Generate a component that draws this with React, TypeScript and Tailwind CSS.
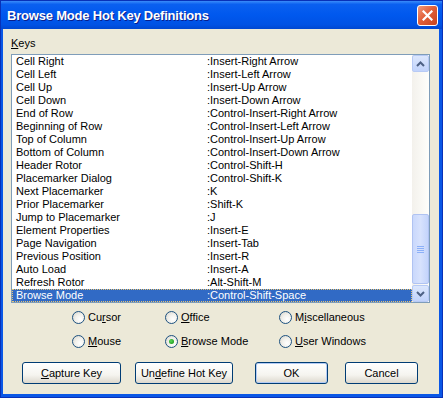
const rows: [string, string][] = [
  ["Cell Right", ":Insert-Right Arrow"],
  ["Cell Left", ":Insert-Left Arrow"],
  ["Cell Up", ":Insert-Up Arrow"],
  ["Cell Down", ":Insert-Down Arrow"],
  ["End of Row", ":Control-Insert-Right Arrow"],
  ["Beginning of Row", ":Control-Insert-Left Arrow"],
  ["Top of Column", ":Control-Insert-Up Arrow"],
  ["Bottom of Column", ":Control-Insert-Down Arrow"],
  ["Header Rotor", ":Control-Shift-H"],
  ["Placemarker Dialog", ":Control-Shift-K"],
  ["Next Placemarker", ":K"],
  ["Prior Placemarker", ":Shift-K"],
  ["Jump to Placemarker", ":J"],
  ["Element Properties", ":Insert-E"],
  ["Page Navigation", ":Insert-Tab"],
  ["Previous Position", ":Insert-R"],
  ["Auto Load", ":Insert-A"],
  ["Refresh Rotor", ":Alt-Shift-M"],
  ["Browse Mode", ":Control-Shift-Space"],
];

const Radio = ({ checked, children }: { checked?: boolean; children: React.ReactNode }) => (
  <div className="flex items-center">
    <span className="w-[13px] h-[13px] rounded-full border border-[#1C5180] bg-[radial-gradient(circle_at_65%_65%,#FFFFFF_0%,#F2F1EC_45%,#D4D2C8_100%)] flex items-center justify-center">
      {checked && <span className="w-[5px] h-[5px] rounded-full bg-[radial-gradient(circle_at_40%_40%,#5CD65C_0%,#21A121_70%)]" />}
    </span>
    <span className="ml-[3px]">{children}</span>
  </div>
);

const Button = ({ w, def, children }: { w: string; def?: boolean; children: React.ReactNode }) => (
  <button
    className={`${w} h-[22px] rounded-[3px] border border-[#003C74] bg-[linear-gradient(180deg,#FFFFFF_0%,#F5F4EF_60%,#DCD8CD_100%)] text-black text-[11px] leading-none ${
      def ? "shadow-[inset_0_0_0_1px_#B3CBF5]" : ""
    }`}
  >
    {children}
  </button>
);

const Chevron = ({ up }: { up?: boolean }) => (
  <svg width="9" height="6" viewBox="0 0 9 6">
    <path d={up ? "M1 5 L4.5 1.5 L8 5" : "M1 1 L4.5 4.5 L8 1"} fill="none" stroke="#4D6185" strokeWidth="2" />
  </svg>
);

export default function App() {
  return (
    <div className="w-[443px] h-[398px] flex flex-col bg-[#0A57E6] border border-[#0831B8] font-['Liberation_Sans',Arial,sans-serif] text-[11px] text-black">
      {/* Title bar */}
      <div className="h-[28px] flex items-center justify-between pl-[6px] pr-[4px] pt-[1px] bg-[linear-gradient(180deg,#3A8CFA_0%,#0A60F0_12%,#0058EE_50%,#0052E4_85%,#0047D0_100%)]">
        <span className="text-white font-bold text-[13px] tracking-[-0.2px] [text-shadow:1px_1px_0_#0A1E8A]">
          Browse Mode Hot Key Definitions
        </span>
        <span className="w-[21px] h-[21px] rounded-[3px] border border-white bg-[linear-gradient(135deg,#F09A7C_0%,#E2603A_45%,#C8431E_100%)] flex items-center justify-center">
          <svg width="11" height="11" viewBox="0 0 11 11">
            <path d="M1.5 1.5 L9.5 9.5 M9.5 1.5 L1.5 9.5" stroke="white" strokeWidth="2.2" strokeLinecap="square" />
          </svg>
        </span>
      </div>

      {/* Body */}
      <div className="flex-1 ml-[2px] mr-[3px] mb-[3px] bg-[#ECE9D8] flex flex-col pt-[8px] pl-[8px]">
        <div className="leading-[13px]">
          <u>K</u>eys
        </div>
        <div className="mt-[4px] w-[419px] h-[249px] border border-[#7F9DB9] bg-white flex">
          <div className="w-[400px] flex flex-col">
            {rows.map(([name, key], i) => {
              const sel = i === rows.length - 1;
              return (
                <div
                  key={i}
                  className={`h-[13px] leading-[13px] flex whitespace-nowrap ${
                    sel ? "bg-[#316AC5] text-white outline outline-1 outline-dotted outline-[#E8C470] -outline-offset-1" : ""
                  }`}
                >
                  <span className="w-[195px] pl-[4px]">{name}</span>
                  <span>{key}</span>
                </div>
              );
            })}
          </div>
          {/* Scrollbar */}
          <div className="w-[17px] flex flex-col bg-[linear-gradient(90deg,#F3F1EC_0%,#FEFEFB_100%)]">
            <div className="h-[17px] rounded-[2px] border border-[#B7CAF5] bg-[linear-gradient(180deg,#DCE7FD_0%,#C1D3FB_100%)] flex items-center justify-center">
              <Chevron up />
            </div>
            <div className="flex-1 flex flex-col justify-end pb-[1px]">
              <div className="h-[70px] rounded-[2px] border border-[#B0C3F2] bg-[linear-gradient(90deg,#C9D8FC_0%,#D7E2FD_50%,#C4D4FB_100%)] flex flex-col items-center justify-center gap-[1px]">
                <span className="w-[7px] h-[1px] bg-[#8CB0F8]" />
                <span className="w-[7px] h-[1px] bg-[#8CB0F8]" />
                <span className="w-[7px] h-[1px] bg-[#8CB0F8]" />
                <span className="w-[7px] h-[1px] bg-[#8CB0F8]" />
              </div>
            </div>
            <div className="h-[17px] rounded-[2px] border border-[#B7CAF5] bg-[linear-gradient(180deg,#DCE7FD_0%,#C1D3FB_100%)] flex items-center justify-center">
              <Chevron />
            </div>
          </div>
        </div>

        {/* Radios */}
        <div className="mt-[2px] pl-[61px] grid grid-cols-[93px_114px_1fr] grid-rows-[24px_24px] items-center">
          <Radio>
            Cu<u>r</u>sor
          </Radio>
          <Radio>
            <u>O</u>ffice
          </Radio>
          <Radio>
            M<u>i</u>scellaneous
          </Radio>
          <Radio>
            <u>M</u>ouse
          </Radio>
          <Radio checked>
            <u>B</u>rowse Mode
          </Radio>
          <Radio>
            <u>U</u>ser Windows
          </Radio>
        </div>

        {/* Buttons */}
        <div className="mt-[9px] pl-[11px] flex">
          <Button w="w-[99px]">
            <u>C</u>apture Key
          </Button>
          <span className="w-[14px]" />
          <Button w="w-[98px]">
            Un<u>d</u>efine Hot Key
          </Button>
          <span className="w-[22px]" />
          <Button w="w-[73px]" def>
            OK
          </Button>
          <span className="w-[17px]" />
          <Button w="w-[73px]">Cancel</Button>
        </div>
      </div>
    </div>
  );
}
